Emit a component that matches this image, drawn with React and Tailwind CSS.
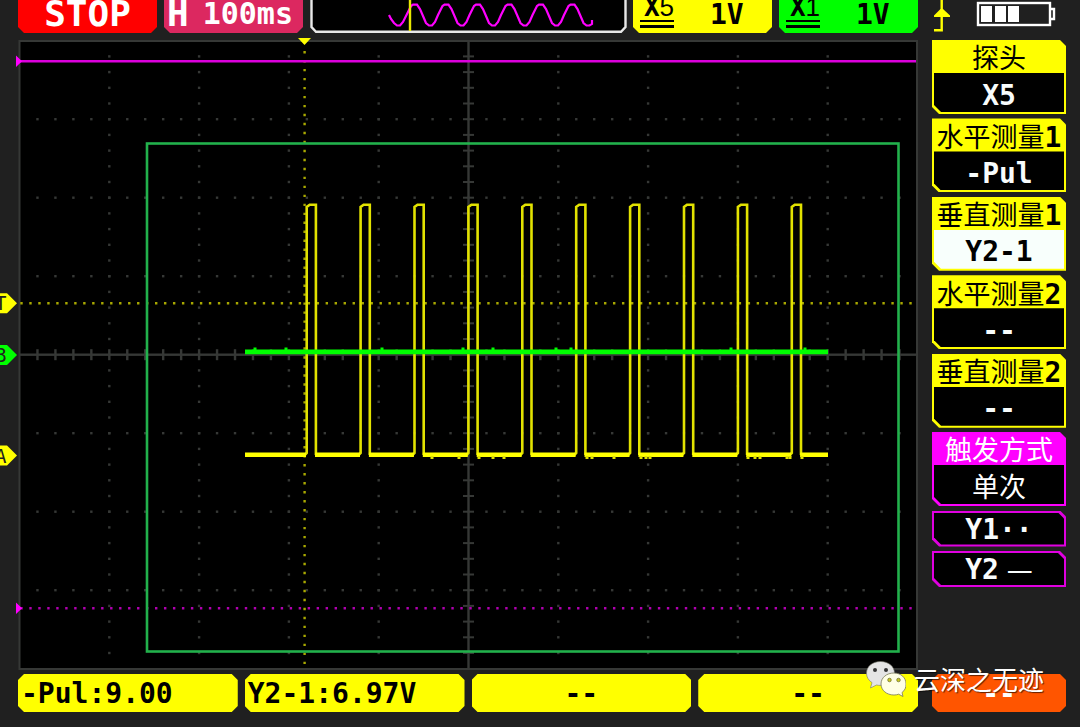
import clsx from "clsx";

const cards = [
  { title: "探头", value: "X5" },
  { title: "水平测量", index: "1", value: "-Pul" },
  { title: "垂直测量", index: "1", value: "Y2-1", active: true },
  { title: "水平测量", index: "2", value: "--" },
  { title: "垂直测量", index: "2", value: "--" },
];

const readouts = ["-Pul:9.00", "Y2-1:6.97V", "--", "--"];

const mono = "font-['DejaVu_Sans_Mono',monospace] font-bold";
const cjk = "font-['Noto_Sans_CJK_SC',sans-serif]";
const cutBottom =
  "[clip-path:polygon(0_0,100%_0,100%_calc(100%_-_6px),calc(100%_-_6px)_100%,6px_100%,0_calc(100%_-_6px))]";
const cutAll =
  "[clip-path:polygon(0_6px,6px_0,calc(100%_-_6px)_0,100%_6px,100%_calc(100%_-_6px),calc(100%_-_6px)_100%,6px_100%,0_calc(100%_-_6px))]";
const cutDiagonal =
  "[clip-path:polygon(0_0,calc(100%_-_6px)_0,100%_6px,100%_100%,7px_100%,0_calc(100%_-_7px))]";
const cutLeft =
  "[clip-path:polygon(0_0,100%_0,100%_100%,7px_100%,0_calc(100%_-_7px))]";

// Grid: 10 x 8 divisions, 5 ticks per division
const LEFT = 19.5;
const TOP = 40.7;
const STEP_X = 17.96;
const STEP_Y = 15.7;
const CENTER_X = 468.5;
const CENTER_Y = 354.7;

function range(n, from = 0) {
  return Array.from({ length: n }, (_, i) => i + from);
}

function Dot({ x, y }) {
  return <rect x={x - 1.2} y={y - 1.2} width="2.4" height="2.4" />;
}

function Graticule() {
  return (
    <g fill="#363836">
      {range(7, 1).map((row) =>
        row === 4
          ? null
          : range(49, 1).map((i) => (
              <Dot key={`r${row}-${i}`} x={LEFT + i * STEP_X} y={TOP + row * 5 * STEP_Y} />
            ))
      )}
      {range(9, 1).map((col) =>
        col === 5
          ? null
          : range(39, 1).map((i) => (
              <Dot key={`c${col}-${i}`} x={LEFT + col * 5 * STEP_X} y={TOP + i * STEP_Y} />
            ))
      )}
      <rect x={CENTER_X - 1.2} y="41" width="2.4" height="627" />
      <rect x="20" y={CENTER_Y - 1.2} width="897" height="2.4" />
      {range(39, 1).map((i) => (
        <rect key={i} x={CENTER_X - 5.5} y={TOP + i * STEP_Y - 1} width="11" height="2" />
      ))}
      {range(49, 1).map((i) => (
        <rect key={i} x={LEFT + i * STEP_X - 1.2} y={CENTER_Y - 5.5} width="2.4" height="11" />
      ))}
    </g>
  );
}

function pulsePath() {
  let d = "";
  for (let i = 0; i < 10; i++) {
    const x = 306.7 + i * 53.9;
    d += `M${x - 2} 455L${x} 453V207L${x + 3} 204.8H${x + 9.2}V455`;
  }
  return d;
}

function baselinePath() {
  let d = "M245 454.8H306";
  for (let i = 0; i < 10; i++) {
    const x = 315 + i * 53.9;
    d += `M${x} 454.8H${i === 9 ? 828 : x + 45}`;
  }
  return d;
}

const baseNoise = [432, 459, 479, 493, 504, 587, 592, 614, 641, 646, 650, 748, 755, 760, 787, 790, 802];
const channelNoise = [255, 286, 382, 463, 493, 556, 571, 731, 805];

function Marker({ y, color, label }) {
  return (
    <g>
      <path d={`M0 ${y - 10}H7L17 ${y}L7 ${y + 10}H0Z`} fill={color} />
      <text
        x="-5"
        y={y + 7}
        fontSize="19"
        fill="#202020"
        className="font-['DejaVu_Sans_Mono',monospace]"
      >
        {label}
      </text>
    </g>
  );
}

function Plot() {
  return (
    <svg viewBox="0 33 918 641" className="block w-full h-auto">
      <rect x="19.5" y="41" width="897.5" height="628" fill="#000" stroke="#363836" strokeWidth="2" />
      <Graticule />

      {/* trigger level and trigger position */}
      <path d="M20.3 303.3H916" stroke="#a8a800" strokeWidth="2.4" strokeDasharray="2.4 6.58" />
      <path d="M304.6 51V668" stroke="#a8a800" strokeWidth="2.4" strokeDasharray="2.4 6.58" />
      <path d="M298 38H311L304.5 45Z" fill="#ff0" />

      {/* Y cursors */}
      <path d="M18 61.2H916" stroke="#dc00dc" strokeWidth="2.6" />
      <path d="M20.3 608.2H916" stroke="#b000b0" strokeWidth="2.4" strokeDasharray="2.4 6.58" />
      <path d="M16 55.5L22 61.2L16 67Z M16 602.5L22 608.2L16 614Z" fill="#f0f" />

      {/* channel A */}
      <path d={pulsePath()} fill="none" stroke="#e2e200" strokeWidth="2.6" />
      <path d={baselinePath()} stroke="#ff0" strokeWidth="4.4" />
      {baseNoise.map((x) => (
        <rect key={x} x={x - 1.5} y="456" width="3" height="3" fill="#e2e200" />
      ))}

      {/* channel B */}
      <path d="M245 351.8H828" stroke="#0f0" strokeWidth="4.8" />
      {channelNoise.map((x) => (
        <rect key={x} x={x - 1.5} y="347.5" width="3" height="3" fill="#0f0" />
      ))}

      <rect x="147" y="143.5" width="751.5" height="508" fill="none" stroke="#22b14c" strokeWidth="2.6" />

      <Marker y={303.3} color="#ff0" label="T" />
      <Marker y={355} color="#0f0" label="B" />
      <Marker y={455.5} color="#ff0" label="A" />
    </svg>
  );
}

function Overview() {
  let d = "M389 15L391 19L394 23L397 25.5H400L403 22L406 16L408 12";
  for (let i = 0; i < 6; i++) {
    const x = 408 + i * 31.5;
    d += `L${x + 3} 6L${x + 5} 4.7H${x + 9}L${x + 12} 9L${x + 15} 16L${x + 18} 23L${x + 21} 25.5H${x + 24}`;
    d += i < 5 ? `L${x + 27} 22L${x + 30} 15L${x + 31.5} 12` : "L592 24V20";
  }
  return (
    <svg viewBox="310 0 316 33" className="block w-full h-full overflow-visible">
      <path
        d="M311.5 0V27L316 31.8H621L625.5 27V0"
        fill="#000"
        stroke="#e8e8e8"
        strokeWidth="2.4"
      />
      <path d={d} fill="none" stroke="#f0f" strokeWidth="2.2" />
      <path d="M410 0V31" stroke="#e8e800" strokeWidth="2.4" />
    </svg>
  );
}

function ChannelChip({ probe, scale, className }) {
  return (
    <button className={clsx("flex items-start h-full pl-[7px]", cutBottom, className)}>
      <span className="flex flex-col items-center w-[34px]">
        <span className="flex h-[18px] items-end leading-none pl-1">
          <span className={clsx(mono, "text-[26px] leading-[22px]")}>X</span>
          <span className="font-['Liberation_Sans',sans-serif] text-[26px] leading-[22px]">{probe}</span>
        </span>
        <span className="mt-[2px] h-2 w-full border-t-2 border-b-3 border-black" />
      </span>
      <span className={clsx(mono, "ml-9 text-[28px] leading-[30px]")}>{scale}</span>
    </button>
  );
}

function StatusIcons() {
  return (
    <svg viewBox="932 0 134 33" className="block w-full h-[33px]">
      <path d="M941.7 0V30.3H934" fill="none" stroke="#ff0" strokeWidth="2.4" />
      <path d="M940.5 9H943L950 15.500V17H934V15.500Z" fill="#ff0" />
      <rect x="978" y="3" width="72" height="22" fill="#202020" stroke="#fff" strokeWidth="2.4" />
      <path d="M1050 9H1054V19H1050" fill="none" stroke="#fff" strokeWidth="2.4" />
      <path d="M981 6H992V22H981Z M995 6H1006V22H995Z M1008 6H1019V22H1008Z" fill="#fff" />
    </svg>
  );
}

function Card({ title, index, value, active }) {
  return (
    <button className={clsx("flex flex-col h-[74px] bg-[#ff0] p-[2px] pt-0 text-black", cutDiagonal)}>
      <span className={clsx(cjk, "flex w-full h-[33px] items-center justify-center pt-[2px] whitespace-nowrap text-[27px]")}>
        {title}
        {index && <span className={clsx(mono, "pt-1 text-[28px]")}>{index}</span>}
      </span>
      <span
        className={clsx(
          mono,
          cutLeft,
          "flex w-full flex-1 items-center justify-center pt-[6px] text-[28px] leading-none",
          active ? "bg-[#f8fffc] text-black" : "bg-black text-[#f8fcfc]"
        )}
      >
        {value}
      </span>
    </button>
  );
}

function CursorKey({ name, children }) {
  return (
    <button className={clsx("h-9 bg-[#e000e0] p-[2px]", cutDiagonal)}>
      <span
        className={clsx(mono, cutDiagonal, "flex h-full items-center justify-center bg-black pt-[2px] text-[28px] leading-none text-[#f8fcfc]")}
      >
        {name}
        {children}
      </span>
    </button>
  );
}

function Watermark() {
  return (
    <div className="absolute right-9 bottom-[30px] flex items-center gap-2">
      <svg viewBox="0 0 40 36" className="w-10 h-9">
        <path
          d="M14.500 0.500C6.500 0.500 0.500 5.500 0.500 12.200C0.500 16 2.500 19.400 6 21.600L4.500 27L10.500 24Q12.500 24.500 15 24.400C22.500 24.200 28.500 19 28.500 12.200C28.500 5.500 22.500 0.500 14.500 0.500Z"
          fill="#e4e4e4"
          stroke="#77776a"
          strokeWidth="0.6"
        />
        <circle cx="9" cy="9" r="2" fill="#333" />
        <circle cx="20" cy="9" r="2" fill="#333" />
        <path
          d="M28 12C20.500 12 15 16.800 15 23C15 29.200 20.500 34 28 34Q30.500 34 32.600 33.200L37 35.500L36 31.500C39 29.400 40 26.500 40 23C40 16.800 35 12 28 12Z"
          fill="#ffffe4"
          stroke="#77775a"
          strokeWidth="0.8"
        />
        <circle cx="23.500" cy="19" r="1.800" fill="#cccc20" stroke="#55551a" strokeWidth="0.6" />
        <circle cx="32.500" cy="19" r="1.800" fill="#cccc20" stroke="#55551a" strokeWidth="0.6" />
      </svg>
      <span
        className={clsx(cjk, "text-[26px] leading-9 text-white [text-shadow:1px_1px_1px_#000000a0]")}
      >
        云深之无迹
      </span>
    </div>
  );
}

export default function App() {
  return (
    <div className="relative flex min-h-screen bg-[#202020] pb-[15px] overflow-hidden">
      <main className="flex-1 min-w-0">
        <header className="grid grid-cols-[139fr_139fr_316fr_139fr_139fr] gap-[7px] h-[33px] pl-[18px]">
          <button className={clsx(mono, cutBottom, "bg-[#f00] text-white text-[36px] leading-[27px] pb-[6px]")}>
            STOP
          </button>
          <button className={clsx(mono, cutBottom, "flex items-start gap-[14px] bg-[#dc2860] pl-[3px] text-white")}>
            <span className="text-[36px] leading-[27px]">H</span>
            <span className="text-[30px] leading-[28px]">100ms</span>
          </button>
          <Overview />
          <ChannelChip probe="5" scale="1V" className="bg-[#ff0]" />
          <ChannelChip probe="1" scale="1V" className="bg-[#0f0]" />
        </header>

        <Plot />

        <footer className="grid grid-cols-4 gap-[7px] pl-[18px]">
          {readouts.map((text, i) => (
            <div
              key={i}
              className={clsx(
                mono,
                cutAll,
                "h-[38px] bg-[#ff0] px-[3px] text-[28px] leading-[40px] text-black",
                text === "--" && "text-center"
              )}
            >
              {text}
            </div>
          ))}
        </footer>
      </main>

      <aside className="flex flex-col w-[134px] mx-[14px] shrink-0">
        <StatusIcons />
        <div className="mt-[7px] flex flex-col justify-between h-[547px]">
          {cards.map((card) => (
            <Card key={card.title + card.index} {...card} />
          ))}
          <button className={clsx(cjk, cutDiagonal, "flex flex-col h-[74px] bg-[#f0f] p-[2px] pt-0 text-[27px] text-white")}>
            <span className="flex w-full h-[33px] items-center justify-center pt-[2px]">触发方式</span>
            <span className={clsx(cutLeft, "flex w-full flex-1 items-center justify-center bg-black pt-[2px] leading-none")}>
              单次
            </span>
          </button>
          <CursorKey name="Y1">··</CursorKey>
          <CursorKey name="Y2">
            <span className="ml-2 font-['DejaVu_Sans',sans-serif] font-normal text-[26px]">—</span>
          </CursorKey>
        </div>
        <div className={clsx(mono, cutAll, "mt-auto h-[38px] bg-[#ff5500] text-center text-[28px] leading-[40px] text-white")}>
          --
        </div>
      </aside>

      <Watermark />
    </div>
  );
}
